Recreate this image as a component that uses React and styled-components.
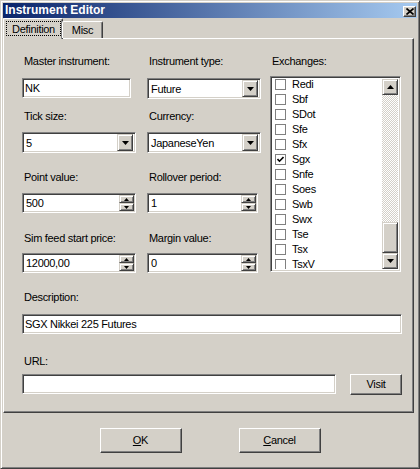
import React from "react";
import styled, { createGlobalStyle } from "styled-components";

const GlobalStyle = createGlobalStyle`
  html, body {
    margin: 0;
    padding: 0;
    background: #d4d0c8;
  }
  body {
    font-family: "Liberation Sans", Arial, sans-serif;
    font-size: 11px;
    letter-spacing: -0.3px;
    color: #000;
  }
`;

const face = "#d4d0c8";
const shadow = "#808080";
const dark = "#404040";

const Window = styled.div`
  width: 420px;
  height: 469px;
  box-sizing: border-box;
  background: ${face};
  border: 1px solid;
  border-color: ${face} ${dark} ${dark} ${face};
  box-shadow: inset 1px 1px #fff, inset -1px -1px ${shadow};
  padding: 2px;
  display: flex;
  flex-direction: column;
`;

const TitleBar = styled.div`
  height: 15px;
  flex: none;
  display: flex;
  align-items: center;
  justify-content: space-between;
  padding: 0 1px 0 2px;
  background: linear-gradient(to right, #0a246a, #a6caf0);
`;

const TitleText = styled.span`
  color: #fff;
  font-weight: bold;
  font-size: 12px;
  letter-spacing: 0;
  line-height: 15px;
`;

const CloseButton = styled.div`
  width: 13px;
  height: 11px;
  box-sizing: border-box;
  background: ${face};
  border: 1px solid;
  border-color: #fff ${dark} ${dark} #fff;
  box-shadow: inset -1px -1px ${shadow};
  display: flex;
  align-items: center;
  justify-content: center;
  margin-top: 1px;
`;

const TabStrip = styled.div`
  height: 20px;
  flex: none;
  display: flex;
  align-items: flex-end;
`;

const Tab = styled.div`
  position: relative;
  z-index: 1;
  box-sizing: border-box;
  width: ${(p) => p.$w}px;
  height: ${(p) => (p.$active ? 21 : 17)}px;
  margin-bottom: ${(p) => (p.$active ? -1 : 0)}px;
  margin-left: ${(p) => (p.$active ? 0 : -1)}px;
  background: ${face};
  border-top: 1px solid #fff;
  border-left: 1px solid #fff;
  border-right: 1px solid ${dark};
  border-radius: 2px 2px 0 0;
  box-shadow: inset -1px 0 ${shadow};
  display: flex;
  align-items: ${(p) => (p.$active ? "stretch" : "center")};
  justify-content: center;
  padding: ${(p) => (p.$active ? "2px 0 3px 2px" : "0")};
  line-height: 14px;
`;

const FocusRect = styled.span`
  flex: 1;
  border: 1px dotted #000;
  display: flex;
  align-items: center;
  justify-content: center;
  margin-right: 1px;
`;

const Panel = styled.div`
  height: 375px;
  flex: none;
  margin-right: 3px;
  box-sizing: border-box;
  border: 1px solid;
  border-color: #fff ${dark} ${dark} #fff;
  box-shadow: inset -1px -1px ${shadow};
  padding: 16px 10px 0 18px;
`;

const TopGrid = styled.div`
  display: grid;
  grid-template-columns: 125px 123px 131px;
  align-items: start;
`;

const Field = styled.div`
  display: flex;
  flex-direction: column;
  margin-top: ${(p) => p.$mt || 0}px;
  grid-column: ${(p) => p.$col || "auto"};
  grid-row: ${(p) => p.$row || "auto"};
`;

const Label = styled.div`
  height: 13px;
  line-height: 13px;
  padding-left: 2px;
  margin-bottom: ${(p) => p.$mb}px;
  white-space: nowrap;
`;

const sunken = `
  box-sizing: border-box;
  background: #fff;
  border: 1px solid;
  border-color: ${shadow} #fff #fff ${shadow};
  box-shadow: inset 1px 1px ${dark}, inset -1px -1px ${face};
`;

const TextBox = styled.input`
  ${sunken}
  width: ${(p) => p.$w}px;
  height: 20px;
  margin: 0;
  padding: 0 2px;
  font: inherit;
  letter-spacing: inherit;
  color: #000;
  outline: none;
`;

const Combo = styled.div`
  ${sunken}
  width: 114px;
  height: 21px;
  display: flex;
  align-items: center;
  padding: 2px;
`;

const FieldText = styled.span`
  flex: 1;
  padding-left: ${(p) => p.$pad ?? 1}px;
  line-height: 16px;
  white-space: nowrap;
  overflow: hidden;
`;

const raised = `
  box-sizing: border-box;
  background: ${face};
  border: 1px solid;
  border-color: ${face} ${dark} ${dark} ${face};
  box-shadow: inset 1px 1px #fff, inset -1px -1px ${shadow};
  display: flex;
  align-items: center;
  justify-content: center;
`;

const DropButton = styled.div`
  ${raised}
  width: 16px;
  height: 17px;
  flex: none;
`;

const Spin = styled.div`
  ${sunken}
  width: ${(p) => p.$w}px;
  height: 20px;
  display: flex;
  align-items: center;
  padding: 2px 1px 2px 2px;
`;

const SpinButtons = styled.div`
  width: 15px;
  height: 16px;
  flex: none;
  display: flex;
  flex-direction: column;
`;

const SpinButton = styled.div`
  ${raised}
  flex: 1;
`;

const ListBox = styled.div`
  ${sunken}
  width: 131px;
  height: 196px;
  padding: 2px;
  display: flex;
`;

const Items = styled.div`
  flex: 1;
  overflow: hidden;
`;

const ItemList = styled.div`
  margin-top: -2px;
`;

const Item = styled.div`
  height: 15px;
  display: flex;
  align-items: center;
  padding-left: 2px;
  line-height: 15px;
`;

const CheckBox = styled.span`
  width: 11px;
  height: 11px;
  box-sizing: border-box;
  border: 1px solid ${shadow};
  background: #fff;
  margin-right: 6px;
  flex: none;
  display: flex;
  align-items: center;
  justify-content: center;
`;

const ScrollBar = styled.div`
  width: 16px;
  flex: none;
  display: flex;
  flex-direction: column;
`;

const ScrollButton = styled.div`
  ${raised}
  height: 16px;
  flex: none;
`;

const Track = styled.div`
  flex: 1;
  display: flex;
  flex-direction: column;
  justify-content: flex-end;
  background: repeating-conic-gradient(#fff 0 25%, ${face} 0 50%) 0 0 / 2px 2px;
`;

const Thumb = styled.div`
  ${raised}
  height: 31px;
`;

const UrlRow = styled.div`
  display: flex;
  align-items: flex-start;
  gap: 14px;
`;

const Button = styled.div`
  box-sizing: border-box;
  width: ${(p) => p.$w}px;
  height: ${(p) => p.$h}px;
  background: ${face};
  border: 1px solid;
  border-color: #fff ${dark} ${dark} #fff;
  box-shadow: inset -1px -1px ${shadow}, inset 1px 1px ${face};
  display: flex;
  align-items: center;
  justify-content: center;
  line-height: 13px;
`;

const ButtonRow = styled.div`
  display: flex;
  justify-content: center;
  gap: 57px;
  margin-top: 15px;
`;

const Down = ({ w = 7, h = 4 }) => (
  <svg width={w} height={h} viewBox={`0 0 ${w} ${h}`}>
    <polygon points={`0,0 ${w},0 ${w / 2},${h}`} fill="#000" />
  </svg>
);

const Up = ({ w = 7, h = 4 }) => (
  <svg width={w} height={h} viewBox={`0 0 ${w} ${h}`}>
    <polygon points={`0,${h} ${w},${h} ${w / 2},0`} fill="#000" />
  </svg>
);

const ComboField = ({ value }) => (
  <Combo>
    <FieldText>{value}</FieldText>
    <DropButton>
      <Down />
    </DropButton>
  </Combo>
);

const SpinField = ({ value, w }) => (
  <Spin $w={w}>
    <FieldText>{value}</FieldText>
    <SpinButtons>
      <SpinButton>
        <Up w={5} h={3} />
      </SpinButton>
      <SpinButton>
        <Down w={5} h={3} />
      </SpinButton>
    </SpinButtons>
  </Spin>
);

const exchanges = [
  "Redi", "Sbf", "SDot", "Sfe", "Sfx", "Sgx", "Snfe",
  "Soes", "Swb", "Swx", "Tse", "Tsx", "TsxV",
];

export default function App() {
  return (
    <>
      <GlobalStyle />
      <Window>
        <TitleBar>
          <TitleText>Instrument Editor</TitleText>
          <CloseButton>
            <svg width="8" height="7" viewBox="0 0 8 7">
              <path d="M0.5 0.5 L7.5 6.5 M7.5 0.5 L0.5 6.5" stroke="#000" strokeWidth="1.7" />
            </svg>
          </CloseButton>
        </TitleBar>
        <TabStrip>
          <Tab $active $w={60}>
            <FocusRect>Definition</FocusRect>
          </Tab>
          <Tab $w={41}>Misc</Tab>
        </TabStrip>
        <Panel>
          <TopGrid>
            <Field $col={1} $row={1}>
              <Label $mb={10}>Master instrument:</Label>
              <TextBox $w={109} defaultValue="NK" readOnly />
            </Field>
            <Field $col={2} $row={1}>
              <Label $mb={10}>Instrument type:</Label>
              <ComboField value="Future" />
            </Field>
            <Field $col={3} $row="1 / span 4">
              <Label $mb={8}>Exchanges:</Label>
              <ListBox>
                <Items>
                  <ItemList>
                    {exchanges.map((name) => (
                      <Item key={name}>
                        <CheckBox>
                          {name === "Sgx" && (
                            <svg width="7" height="7" viewBox="0 0 7 7">
                              <path d="M0.5 3 L2.5 5.2 L6.5 1" stroke="#000" strokeWidth="1.6" fill="none" />
                            </svg>
                          )}
                        </CheckBox>
                        {name}
                      </Item>
                    ))}
                  </ItemList>
                </Items>
                <ScrollBar>
                  <ScrollButton>
                    <Up />
                  </ScrollButton>
                  <Track>
                    <Thumb />
                  </Track>
                  <ScrollButton>
                    <Down />
                  </ScrollButton>
                </ScrollBar>
              </ListBox>
            </Field>

            <Field $col={1} $row={2} $mt={11}>
              <Label $mb={9}>Tick size:</Label>
              <ComboField value="5" />
            </Field>
            <Field $col={2} $row={2} $mt={11}>
              <Label $mb={9}>Currency:</Label>
              <ComboField value="JapaneseYen" />
            </Field>

            <Field $col={1} $row={3} $mt={18}>
              <Label $mb={9}>Point value:</Label>
              <SpinField value="500" w={114} />
            </Field>
            <Field $col={2} $row={3} $mt={18}>
              <Label $mb={9}>Rollover period:</Label>
              <SpinField value="1" w={111} />
            </Field>

            <Field $col={1} $row={4} $mt={19}>
              <Label $mb={8}>Sim feed start price:</Label>
              <SpinField value="12000,00" w={114} />
            </Field>
            <Field $col={2} $row={4} $mt={19}>
              <Label $mb={8}>Margin value:</Label>
              <SpinField value="0" w={111} />
            </Field>
          </TopGrid>

          <Field $mt={18}>
            <Label $mb={10}>Description:</Label>
            <TextBox $w={380} defaultValue="SGX Nikkei 225 Futures" readOnly />
          </Field>

          <Field $mt={21}>
            <Label $mb={6}>URL:</Label>
            <UrlRow>
              <TextBox $w={314} defaultValue="" readOnly />
              <Button $w={52} $h={21}>Visit</Button>
            </UrlRow>
          </Field>
        </Panel>
        <ButtonRow>
          <Button $w={82} $h={25}>
            <span>
              <u>O</u>K
            </span>
          </Button>
          <Button $w={82} $h={25}>
            <span>
              <u>C</u>ancel
            </span>
          </Button>
        </ButtonRow>
      </Window>
    </>
  );
}
